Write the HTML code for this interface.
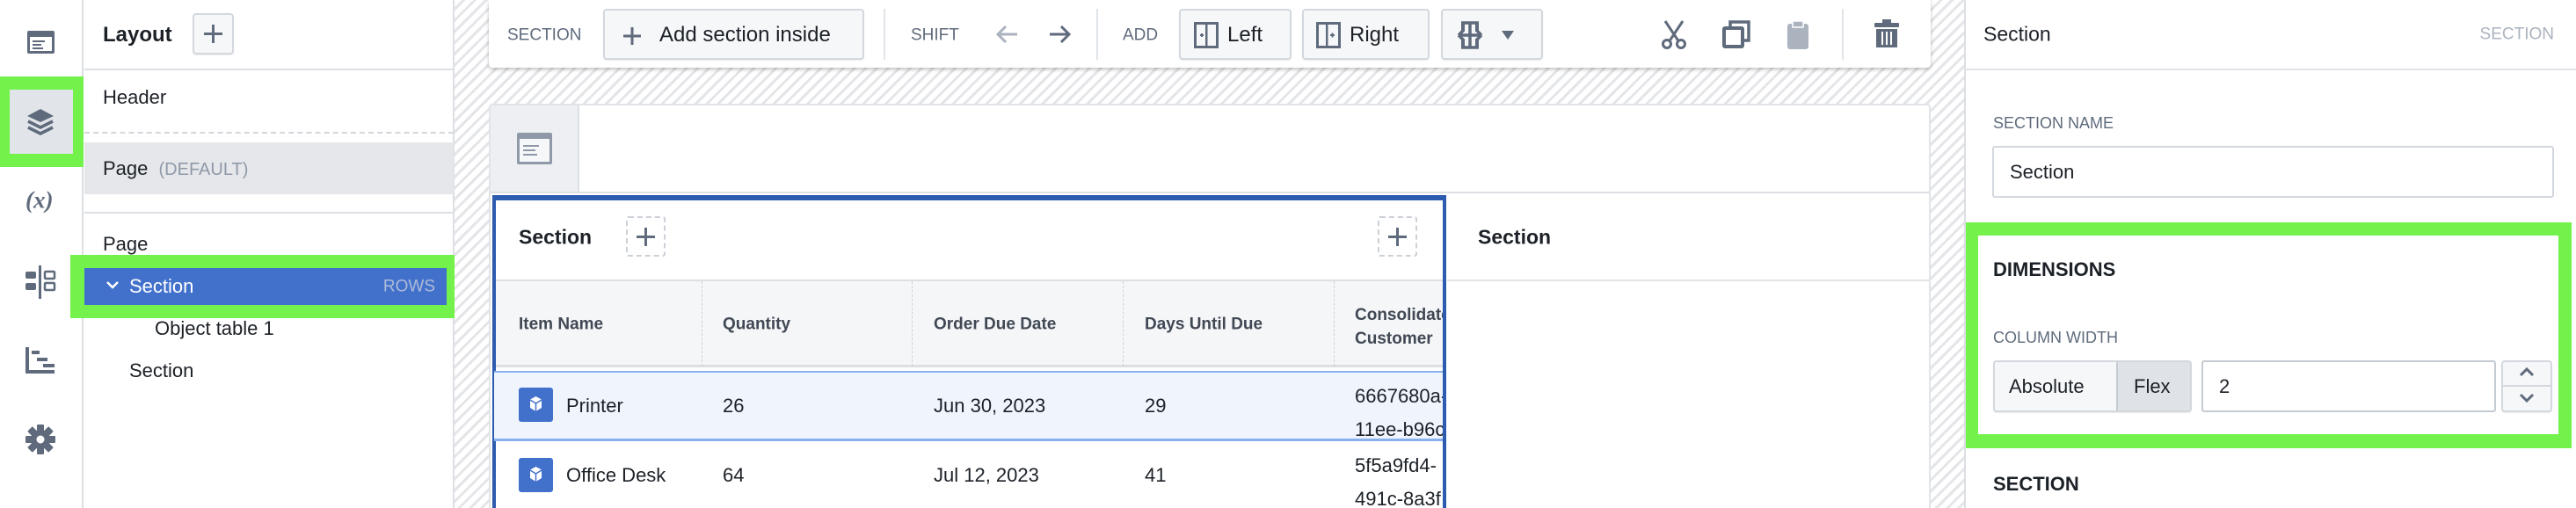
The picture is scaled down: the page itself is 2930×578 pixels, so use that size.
<!DOCTYPE html>
<html><head><meta charset="utf-8"><style>
*{box-sizing:border-box;margin:0;padding:0}
html,body{width:2930px;height:578px;overflow:hidden}
body{position:relative;background:#fff;font-family:"Liberation Sans",sans-serif;color:#1c2127}
.a{position:absolute}
.t{position:absolute;white-space:nowrap;line-height:1;transform:translateY(-50%)}
.hatch{background:repeating-linear-gradient(135deg,#fff 0 6px,#e3e5e8 6px 9px)}
.grey{color:#5f6b7c}
.btn{position:absolute;background:#f6f7f9;border:2px solid #d3d8de;border-radius:4px;box-shadow:0 1px 1px rgba(0,0,0,.08)}
.sep{position:absolute;width:2px;background:#e1e4e8}
</style></head><body>

<!-- left rail -->
<div class="a" style="left:0;top:0;width:95px;height:578px;background:#fff;border-right:2px solid #dcdfe3"></div>
<svg class="a" style="left:30px;top:34px" width="33" height="28" viewBox="0 0 33 28"><rect x="1" y="1" width="31" height="26" rx="2" fill="#5f6b7c"/><rect x="4" y="8" width="25" height="16" fill="#fff"/><rect x="7" y="12" width="14" height="2" fill="#5f6b7c"/><rect x="7" y="16" width="10" height="2" fill="#5f6b7c"/><rect x="7" y="20" width="12" height="2" fill="#5f6b7c"/></svg>
<div class="a" style="left:0;top:87px;width:98px;height:103px;background:#72f24a"></div>
<div class="a" style="left:11px;top:102px;width:72px;height:73px;background:#e1e4e8"></div>
<svg class="a" style="left:29px;top:122px" width="34" height="34" viewBox="0 0 34 34"><path d="M17 2 L32 10 L17 17 L2 10Z" fill="#5f6b7c"/><path d="M3 16 L17 23 L31 16" stroke="#5f6b7c" stroke-width="3.5" fill="none"/><path d="M3 23 L17 30 L31 23" stroke="#5f6b7c" stroke-width="3.5" fill="none"/></svg>
<div class="t" style="left:29px;top:228px;font-family:'Liberation Serif',serif;font-style:italic;font-weight:bold;font-size:27px;color:#5f6b7c">(x)</div>
<svg class="a" style="left:29px;top:302px" width="35" height="38" viewBox="0 0 35 38"><rect x="0" y="7" width="12" height="8" rx="2" fill="#5f6b7c"/><rect x="0" y="20" width="12" height="8" rx="2" fill="#5f6b7c"/><rect x="15" y="0" width="3" height="38" fill="#5f6b7c"/><rect x="22" y="7" width="11" height="8" rx="1" fill="none" stroke="#5f6b7c" stroke-width="2.5"/><rect x="22" y="20" width="11" height="8" rx="1" fill="none" stroke="#5f6b7c" stroke-width="2.5"/></svg>
<svg class="a" style="left:29px;top:395px" width="35" height="30" viewBox="0 0 35 30"><path d="M2 0 V28 H33" stroke="#5f6b7c" stroke-width="4" fill="none"/><rect x="7" y="4" width="9" height="4" fill="#5f6b7c"/><rect x="13" y="12" width="12" height="4" fill="#5f6b7c"/><rect x="20" y="19" width="13" height="4" fill="#5f6b7c"/></svg>
<svg class="a" style="left:29px;top:483px" width="34" height="34" viewBox="0 0 34 34"><g fill="#5f6b7c"><circle cx="17" cy="17" r="11"/><g id="g"><rect x="13" y="0" width="8" height="8" rx="1"/><rect x="13" y="26" width="8" height="8" rx="1"/><rect x="0" y="13" width="8" height="8" rx="1"/><rect x="26" y="13" width="8" height="8" rx="1"/></g><use href="#g" transform="rotate(45 17 17)"/></g><circle cx="17" cy="17" r="4.5" fill="#fff"/></svg>

<!-- layout panel -->
<div class="a" style="left:95px;top:0;width:422px;height:578px;background:#fff;border-right:2px solid #dcdfe3"></div>
<div class="t" style="left:117px;top:40px;font-size:24px;font-weight:bold">Layout</div>
<div class="btn" style="left:219px;top:15px;width:47px;height:47px"></div>
<svg class="a" style="left:230px;top:26px" width="25" height="25"><path d="M12.5 2V23M2 12.5H23" stroke="#5f6b7c" stroke-width="3"/></svg>
<div class="a" style="left:96px;top:78px;width:420px;height:2px;background:#dcdfe3"></div>
<div class="t" style="left:117px;top:111px;font-size:22px">Header</div>
<div class="a" style="left:96px;top:150px;width:420px;border-top:2px dashed #d3d8de"></div>
<div class="a" style="left:96px;top:162px;width:420px;height:59px;background:#e5e7ea"></div>
<div class="t" style="left:117px;top:192px;font-size:22px">Page <span style="color:#8f99a8;font-size:20px;margin-left:6px">(DEFAULT)</span></div>
<div class="a" style="left:96px;top:241px;width:420px;height:2px;background:#dcdfe3"></div>
<div class="t" style="left:117px;top:278px;font-size:22px">Page</div>
<div class="a" style="left:80px;top:290px;width:443px;height:72px;background:#72f24a"></div>
<div class="a" style="left:96px;top:305px;width:412px;height:42px;background:#4271cc"></div>
<svg class="a" style="left:120px;top:318px" width="16" height="12"><path d="M2 3 L8 9 L14 3" stroke="#fff" stroke-width="2.5" fill="none"/></svg>
<div class="t" style="left:147px;top:326px;font-size:22px;color:#fff">Section</div>
<div class="t" style="right:2435px;top:326px;font-size:19px;color:#aebbd8">ROWS</div>
<div class="t" style="left:176px;top:374px;font-size:22px">Object table 1</div>
<div class="t" style="left:147px;top:422px;font-size:22px">Section</div>

<!-- canvas -->
<div class="a hatch" style="left:517px;top:0;width:1719px;height:578px"></div>
<!-- toolbar -->
<div class="a" style="left:556px;top:0;width:1640px;height:77px;background:#fff;border-radius:0 0 4px 4px;box-shadow:0 2px 4px rgba(0,0,0,.25)"></div>
<div class="t grey" style="left:577px;top:40px;font-size:19px">SECTION</div>
<div class="btn" style="left:686px;top:10px;width:297px;height:58px"></div>
<svg class="a" style="left:708px;top:30px" width="22" height="22"><path d="M11 1V21M1 11H21" stroke="#5f6b7c" stroke-width="3"/></svg>
<div class="t" style="left:750px;top:40px;font-size:24px">Add section inside</div>
<div class="sep" style="left:1005px;top:10px;height:58px"></div>
<div class="t grey" style="left:1036px;top:40px;font-size:19px">SHIFT</div>
<svg class="a" style="left:1131px;top:27px" width="28" height="24"><path d="M26 12H4M13 3 L4 12 L13 21" stroke="#abb3bf" stroke-width="3" fill="none"/></svg>
<svg class="a" style="left:1192px;top:27px" width="28" height="24"><path d="M2 12H24M15 3 L24 12 L15 21" stroke="#5f6b7c" stroke-width="3" fill="none"/></svg>
<div class="sep" style="left:1247px;top:10px;height:58px"></div>
<div class="t grey" style="left:1277px;top:40px;font-size:19px">ADD</div>
<div class="btn" style="left:1341px;top:10px;width:128px;height:58px"></div>
<svg class="a" style="left:1358px;top:25px" width="28" height="30"><rect x="1.5" y="1.5" width="25" height="27" fill="none" stroke="#5f6b7c" stroke-width="3"/><rect x="13" y="1" width="2.5" height="28" fill="#5f6b7c"/><path d="M7 15H11M9 13V17" stroke="#5f6b7c" stroke-width="2"/></svg>
<div class="t" style="left:1396px;top:40px;font-size:24px">Left</div>
<div class="btn" style="left:1481px;top:10px;width:145px;height:58px"></div>
<svg class="a" style="left:1497px;top:25px" width="28" height="30"><rect x="1.5" y="1.5" width="25" height="27" fill="none" stroke="#5f6b7c" stroke-width="3"/><rect x="11" y="1" width="2.5" height="28" fill="#5f6b7c"/><path d="M16 15H21M18.5 12.5V17.5" stroke="#5f6b7c" stroke-width="2"/></svg>
<div class="t" style="left:1535px;top:40px;font-size:24px">Right</div>
<div class="btn" style="left:1639px;top:10px;width:116px;height:58px"></div>
<svg class="a" style="left:1655px;top:24px" width="34" height="32"><path d="M7 2H27M7 30H27M17 2V30M4 16H30M4 16 L9 11M4 16 L9 21M30 16 L25 11M30 16 L25 21" stroke="#5f6b7c" stroke-width="3.5" fill="none"/><rect x="7" y="2" width="4" height="10" fill="#5f6b7c"/><rect x="23" y="2" width="4" height="10" fill="#5f6b7c"/><rect x="7" y="20" width="4" height="10" fill="#5f6b7c"/><rect x="23" y="20" width="4" height="10" fill="#5f6b7c"/></svg>
<svg class="a" style="left:1707px;top:34px" width="16" height="12"><path d="M1 1H15L8 11Z" fill="#5f6b7c"/></svg>
<svg class="a" style="left:1888px;top:22px" width="32" height="34"><path d="M6 2 L22 26M26 2 L10 26" stroke="#5f6b7c" stroke-width="3"/><circle cx="8" cy="28" r="4.5" fill="#fff" stroke="#5f6b7c" stroke-width="3"/><circle cx="24" cy="28" r="4.5" fill="#fff" stroke="#5f6b7c" stroke-width="3"/></svg>
<svg class="a" style="left:1959px;top:23px" width="32" height="32"><path d="M9 8 V2 H30 V23 H24" stroke="#5f6b7c" stroke-width="3.5" fill="none"/><rect x="2" y="9" width="21" height="21" rx="1" fill="none" stroke="#5f6b7c" stroke-width="4"/></svg>
<svg class="a" style="left:2033px;top:22px" width="24" height="34"><rect x="0" y="5" width="24" height="29" rx="3" fill="#abb3bf"/><path d="M6 2H18V9H6Z" fill="#abb3bf" stroke="#fff" stroke-width="1.5"/></svg>
<div class="sep" style="left:2095px;top:10px;height:58px"></div>
<svg class="a" style="left:2132px;top:22px" width="28" height="34"><rect x="0" y="4" width="28" height="5" rx="1" fill="#5f6b7c"/><rect x="9" y="0" width="10" height="5" fill="#5f6b7c"/><path d="M2 11H26V32H2Z" fill="#5f6b7c"/><path d="M9 14V29M14 14V29M19 14V29" stroke="#fff" stroke-width="2"/></svg>

<!-- card -->
<div class="a" style="left:556px;top:118px;width:1640px;height:460px;background:#fff;border:2px solid #e1e4e8;border-bottom:none;border-radius:4px 4px 0 0"></div>
<div class="a" style="left:558px;top:120px;width:101px;height:98px;background:#edeff2;border-right:2px solid #dcdfe3"></div>
<svg class="a" style="left:588px;top:151px" width="40" height="36"><rect x="0" y="0" width="40" height="36" rx="2" fill="#8f99a8"/><rect x="3" y="7" width="34" height="26" fill="#f6f7f9"/><rect x="7" y="14" width="18" height="2" fill="#8f99a8"/><rect x="7" y="19" width="14" height="2" fill="#8f99a8"/><rect x="7" y="24" width="16" height="2" fill="#8f99a8"/></svg>
<div class="a" style="left:558px;top:218px;width:1636px;height:2px;background:#dcdfe3"></div>
<!-- right section -->
<div class="t" style="left:1681px;top:270px;font-size:23px;font-weight:bold">Section</div>
<div class="a" style="left:1646px;top:318px;width:548px;height:2px;background:#e1e4e8"></div>
<!-- selected section -->
<div class="a" style="left:560px;top:222px;width:1085px;height:356px;border:4px solid #2d5bb0;border-top-width:6px;border-bottom:none;background:#fff"></div>
<div class="t" style="left:590px;top:270px;font-size:23px;font-weight:bold">Section</div>
<div class="a" style="left:712px;top:246px;width:45px;height:46px;border:2px dashed #ccd1d8;border-radius:3px"></div>
<svg class="a" style="left:723px;top:258px" width="23" height="23"><path d="M11.5 1V22M1 11.5H22" stroke="#5f6b7c" stroke-width="3"/></svg>
<div class="a" style="left:1567px;top:246px;width:45px;height:46px;border:2px dashed #ccd1d8;border-radius:3px"></div>
<svg class="a" style="left:1578px;top:258px" width="23" height="23"><path d="M11.5 1V22M1 11.5H22" stroke="#5f6b7c" stroke-width="3"/></svg>
<div class="a" style="left:564px;top:318px;width:1077px;height:100px;background:#f5f6f8;border-top:2px solid #dcdfe3;border-bottom:3px solid #dcdfe3"></div>
<div class="a" style="left:798px;top:320px;height:97px;border-left:1px dashed #ccd1d8"></div>
<div class="a" style="left:1037px;top:320px;height:97px;border-left:1px dashed #ccd1d8"></div>
<div class="a" style="left:1277px;top:320px;height:97px;border-left:1px dashed #ccd1d8"></div>
<div class="a" style="left:1517px;top:320px;height:97px;border-left:1px dashed #ccd1d8"></div>
<div class="t" style="left:590px;top:369px;font-size:19px;font-weight:bold;color:#404854">Item Name</div>
<div class="t" style="left:822px;top:369px;font-size:19px;font-weight:bold;color:#404854">Quantity</div>
<div class="t" style="left:1062px;top:369px;font-size:19px;font-weight:bold;color:#404854">Order Due Date</div>
<div class="t" style="left:1302px;top:369px;font-size:19px;font-weight:bold;color:#404854">Days Until Due</div>
<div class="a" style="left:1541px;top:345px;width:100px;overflow:hidden;font-size:19px;font-weight:bold;color:#404854;line-height:27px;white-space:nowrap">Consolidated<br>Customer</div>
<div class="a" style="left:562px;top:422px;width:1079px;height:80px;background:#f0f5fd;border-top:2px solid #8ab1ef;border-bottom:3px solid #8ab1ef"></div>
<svg class="a" style="left:590px;top:441px" width="39" height="39"><rect width="39" height="39" rx="3" fill="#4271cc"/><path d="M19.5 10 L26 13.5 V23 L19.5 27 L13 23 V13.5Z" fill="#fff"/><path d="M13 14 L19.5 18 L26 14M19.5 18V27" stroke="#4271cc" stroke-width="1.5" fill="none"/></svg>
<div class="t" style="left:644px;top:462px;font-size:22px">Printer</div>
<div class="t" style="left:822px;top:462px;font-size:22px">26</div>
<div class="t" style="left:1062px;top:462px;font-size:22px">Jun 30, 2023</div>
<div class="t" style="left:1302px;top:462px;font-size:22px">29</div>
<div class="a" style="left:1541px;top:432px;width:100px;overflow:hidden;font-size:22px;line-height:38px;white-space:nowrap">6667680a-<br>11ee-b96c</div>
<svg class="a" style="left:590px;top:521px" width="39" height="39"><rect width="39" height="39" rx="3" fill="#4271cc"/><path d="M19.5 10 L26 13.5 V23 L19.5 27 L13 23 V13.5Z" fill="#fff"/><path d="M13 14 L19.5 18 L26 14M19.5 18V27" stroke="#4271cc" stroke-width="1.5" fill="none"/></svg>
<div class="t" style="left:644px;top:541px;font-size:22px">Office Desk</div>
<div class="t" style="left:822px;top:541px;font-size:22px">64</div>
<div class="t" style="left:1062px;top:541px;font-size:22px">Jul 12, 2023</div>
<div class="t" style="left:1302px;top:541px;font-size:22px">41</div>
<div class="a" style="left:1541px;top:511px;width:100px;height:67px;overflow:hidden;font-size:22px;line-height:38px;white-space:nowrap">5f5a9fd4-<br>491c-8a3f</div>

<!-- right panel -->
<div class="a" style="left:2234px;top:0;width:696px;height:578px;background:#fff;border-left:2px solid #dcdfe3"></div>
<div class="t" style="left:2256px;top:39px;font-size:23px">Section</div>
<div class="t" style="right:25px;top:39px;font-size:19px;color:#abb3bf">SECTION</div>
<div class="a" style="left:2236px;top:78px;width:694px;height:2px;background:#e1e4e8"></div>
<div class="t grey" style="left:2267px;top:140px;font-size:18px">SECTION NAME</div>
<div class="a" style="left:2266px;top:166px;width:639px;height:59px;border:2px solid #d3d8de;border-radius:3px"></div>
<div class="t" style="left:2286px;top:196px;font-size:22px">Section</div>
<div class="a" style="left:2236px;top:253px;width:689px;height:257px;background:#72f24a"></div>
<div class="a" style="left:2250px;top:268px;width:660px;height:226px;background:#fff"></div>
<div class="t" style="left:2267px;top:307px;font-size:22px;font-weight:bold">DIMENSIONS</div>
<div class="t grey" style="left:2267px;top:384px;font-size:18px">COLUMN WIDTH</div>
<div class="btn" style="left:2267px;top:410px;width:226px;height:59px"></div>
<div class="a" style="left:2407px;top:412px;width:84px;height:55px;background:#dfe2e6;border-left:2px solid #c5cbd3"></div>
<div class="t" style="left:2285px;top:440px;font-size:22px">Absolute</div>
<div class="t" style="left:2427px;top:440px;font-size:22px">Flex</div>
<div class="a" style="left:2504px;top:410px;width:335px;height:59px;border:2px solid #c5cbd3;border-radius:3px"></div>
<div class="t" style="left:2524px;top:440px;font-size:22px">2</div>
<div class="btn" style="left:2845px;top:410px;width:58px;height:59px"></div>
<div class="a" style="left:2847px;top:438px;width:54px;height:2px;background:#d3d8de"></div>
<svg class="a" style="left:2864px;top:416px" width="20" height="14"><path d="M3 11 L10 4 L17 11" stroke="#5f6b7c" stroke-width="3" fill="none"/></svg>
<svg class="a" style="left:2864px;top:446px" width="20" height="14"><path d="M3 3 L10 10 L17 3" stroke="#5f6b7c" stroke-width="3" fill="none"/></svg>
<div class="t" style="left:2267px;top:551px;font-size:22px;font-weight:bold">SECTION</div>
</body></html>
